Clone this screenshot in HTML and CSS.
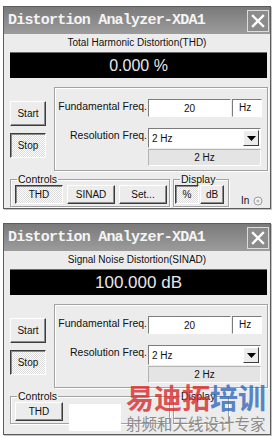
FILE: index.html
```html
<!DOCTYPE html>
<html lang="en">
<head>
    <meta charset="UTF-8">
    <meta name="viewport" content="width=device-width, initial-scale=1.0">
    <title>Distortion Analyzer-XDA1</title>
    <link rel="stylesheet" href="styles.css">
</head>
<body>
    <div class="window">
        <div class="titlebar">
            <span class="title">Distortion Analyzer-XDA1</span>
            <span class="close">
                <svg width="14" height="14" viewBox="0 0 14 14"><path d="M2 2 L12 12 M12 2 L2 12" stroke="#fff" stroke-width="2.4" stroke-linecap="square"/></svg>
            </span>
        </div>
        <div class="caption">Total Harmonic Distortion(THD)</div>
        <div class="display">0.000 %</div>

        <div class="main">
            <div class="run-buttons">
                <span class="btn">Start</span>
                <span class="btn pressed">Stop</span>
            </div>
            <div class="freq-box">
                <div class="row">
                    <span class="label">Fundamental Freq.</span>
                    <span class="field">20</span>
                    <span class="unit">Hz</span>
                </div>
                <div class="row row-select">
                    <span class="label">Resolution Freq.</span>
                    <span class="select">2 Hz<span class="arrow"><svg width="9" height="5" viewBox="0 0 9 5"><path d="M0 0 H9 L4.5 5 Z" fill="#000"/></svg></span></span>
                </div>
                <div class="readout">2 Hz</div>
            </div>
        </div>

        <div class="bottom">
            <fieldset class="group controls">
                <legend>Controls</legend>
                <div class="group-buttons">
                    <span class="btn pressed">THD</span>
                    <span class="btn">SINAD</span>
                    <span class="btn">Set...</span>
                </div>
            </fieldset>
            <fieldset class="group display-group">
                <legend>Display</legend>
                <div class="group-buttons">
                    <span class="btn pressed small">%</span>
                    <span class="btn small">dB</span>
                </div>
            </fieldset>
            <span class="in">In
                <svg width="10" height="10" viewBox="0 0 10 10"><circle cx="5" cy="5" r="4" fill="#f4f4f4" stroke="#9a9a9a"/><circle cx="5" cy="5" r="1.6" fill="#bbb"/></svg>
            </span>
        </div>
    </div>

    <div class="window tall">
        <div class="titlebar">
            <span class="title">Distortion Analyzer-XDA1</span>
            <span class="close">
                <svg width="14" height="14" viewBox="0 0 14 14"><path d="M2 2 L12 12 M12 2 L2 12" stroke="#fff" stroke-width="2.4" stroke-linecap="square"/></svg>
            </span>
        </div>
        <div class="caption">Signal Noise Distortion(SINAD)</div>
        <div class="display big">100.000 dB</div>

        <div class="main">
            <div class="run-buttons">
                <span class="btn">Start</span>
                <span class="btn pressed">Stop</span>
            </div>
            <div class="freq-box">
                <div class="row">
                    <span class="label">Fundamental Freq.</span>
                    <span class="field">20</span>
                    <span class="unit">Hz</span>
                </div>
                <div class="row row-select">
                    <span class="label">Resolution Freq.</span>
                    <span class="select">2 Hz<span class="arrow"><svg width="9" height="5" viewBox="0 0 9 5"><path d="M0 0 H9 L4.5 5 Z" fill="#000"/></svg></span></span>
                </div>
                <div class="readout">2 Hz</div>
            </div>
        </div>

        <!-- the rest of this row is hidden under the watermark in the shot -->
        <div class="bottom">
            <fieldset class="group controls">
                <legend>Controls</legend>
                <div class="group-buttons">
                    <span class="btn">THD</span>
                    <span class="btn covered">SINAD</span>
                    <span class="btn covered">Set...</span>
                </div>
            </fieldset>
            <fieldset class="group display-group">
                <legend>Display</legend>
                <div class="group-buttons">
                    <span class="btn small covered">%</span>
                    <span class="btn small covered">dB</span>
                </div>
            </fieldset>
        </div>
    </div>

    <div class="blank"></div>
    <div class="watermark">
        <div class="wm-big"><span class="wm-red">易迪拓</span><span class="wm-blue">培训</span></div>
        <div class="wm-small">射频和天线设计专家</div>
    </div>
</body>
</html>
```

FILE: styles.css
```css
body {
    margin: 0;
    padding: 6px 0 0 3px;
    height: 436px;
    box-sizing: border-box;
    overflow: hidden;
    position: relative;
    background: #fff;
    font-family: "Liberation Sans", Arial, sans-serif;
    font-size: 10px;
    color: #111;
}

.window {
    width: 268px;
    box-sizing: border-box;
    border: 1px solid #5c5c5c;
    background: #ececec;
    padding-bottom: 1px;
    box-shadow: 1px 1px 0 #c4c4c4;
}

.window + .window {
    margin-top: 14px;
}

.window.tall {
    padding-bottom: 10px;
}

.titlebar {
    height: 27px;
    display: flex;
    align-items: center;
    justify-content: space-between;
    padding: 0 1px 0 4px;
    background: linear-gradient(#7a7a7a, #9c9c9c);
}

.title {
    font-family: "Liberation Mono", monospace;
    font-weight: bold;
    font-size: 15px;
    letter-spacing: -0.8px;
    color: #f4f4f4;
}

.close {
    width: 20px;
    height: 20px;
    border: 1px solid #dcdcdc;
    background: #8c8c8c;
    display: flex;
    align-items: center;
    justify-content: center;
}

.caption {
    height: 18px;
    line-height: 18px;
    text-align: center;
}

.display {
    margin: 0 3px 0 6px;
    height: 26px;
    line-height: 26px;
    background: #000;
    border-top: 1px solid #6a6a6a;
    box-sizing: border-box;
    color: #e8e8e8;
    font-size: 16px;
    text-align: center;
}

.display.big {
    font-size: 17px;
}

.main {
    display: flex;
    align-items: flex-start;
    gap: 8px;
    margin-top: 9px;
    padding-left: 6px;
}

.run-buttons {
    display: flex;
    flex-direction: column;
    gap: 7px;
    margin-top: 14px;
    width: 36px;
}

.btn {
    height: 25px;
    box-sizing: border-box;
    display: flex;
    align-items: center;
    justify-content: center;
    background: #ececec;
    border: 1px solid;
    border-color: #fff #3c3c3c #3c3c3c #fff;
    box-shadow: inset -1px -1px 0 #8c8c8c;
}

.btn.pressed {
    border-color: #3c3c3c #fff #fff #3c3c3c;
    box-shadow: inset 1px 1px 0 #8c8c8c;
    background-color: #f6f6f6;
    background-image: conic-gradient(#fff 25%, #dadada 0 50%, #fff 0 75%, #dadada 0);
    background-size: 2px 2px;
}

.btn.covered {
    visibility: hidden;
}

.freq-box {
    flex: 1;
    margin-right: 2px;
    height: 84px;
    box-sizing: border-box;
    border: 1px solid #a2a2a2;
    box-shadow: inset 1px 1px 0 #fff, 1px 1px 0 #fff;
    padding-top: 11px;
}

.row {
    display: flex;
    align-items: flex-start;
    gap: 1px;
}

.row-select {
    margin-top: 11px;
}

.label {
    width: 92px;
    text-align: right;
    font-size: 10.5px;
    line-height: 12px;
    padding-top: 1px;
}

.field,
.unit {
    height: 18px;
    box-sizing: border-box;
    background: #fff;
    border: 1px solid;
    border-color: #7c7c7c #fff #fff #7c7c7c;
    line-height: 16px;
}

.field {
    width: 83px;
    text-align: center;
    padding-top: 1px;
}

.unit {
    width: 30px;
    padding-left: 6px;
}

.select {
    width: 113px;
    height: 20px;
    box-sizing: border-box;
    background: #fff;
    border: 1px solid;
    border-color: #7c7c7c #fff #fff #7c7c7c;
    display: flex;
    align-items: center;
    justify-content: space-between;
    padding-left: 3px;
}

.arrow {
    width: 16px;
    height: 16px;
    box-sizing: border-box;
    margin-right: 1px;
    background: #ececec;
    border: 1px solid;
    border-color: #fff #3c3c3c #3c3c3c #fff;
    display: flex;
    align-items: center;
    justify-content: center;
}

.readout {
    margin: 1px 0 0 93px;
    width: 113px;
    height: 17px;
    box-sizing: border-box;
    line-height: 15px;
    text-align: center;
    background: #e4e4e4;
    border: 1px solid;
    border-color: #b4b4b4 #fff #fff #b4b4b4;
}

.bottom {
    display: flex;
    align-items: flex-end;
    gap: 3px;
    margin-top: 2px;
    padding-left: 6px;
}

.group {
    margin: 0;
    padding: 0 2px 2px 4px;
    border: 1px solid #a2a2a2;
    box-shadow: inset 1px 1px 0 #fff, 1px 1px 0 #fff;
}

.group legend {
    padding: 0 1px;
    margin-left: 2px;
    line-height: 13px;
    font-size: 10.5px;
}

.group-buttons {
    display: flex;
    gap: 4px;
    margin-top: -1px;
}

.controls {
    width: 160px;
    box-sizing: border-box;
}

.controls .btn {
    width: 48px;
    height: 19px;
}

.display-group {
    width: 56px;
    box-sizing: border-box;
    padding-left: 1px;
}

.display-group legend {
    margin-left: 5px;
}

.display-group .group-buttons {
    gap: 1px;
}

.btn.small {
    width: 24px;
    height: 19px;
}

.in {
    display: flex;
    align-items: center;
    gap: 4px;
    margin-left: 9px;
    margin-bottom: 1px;
}

.blank {
    position: absolute;
    left: 69px;
    top: 404px;
    width: 52px;
    height: 27px;
    background: #fff;
}

.watermark {
    position: absolute;
    left: 126px;
    top: 382px;
    font-family: "Noto Sans CJK SC", sans-serif;
}

.wm-big {
    font-size: 28px;
    font-weight: bold;
    line-height: 31px;
}

.wm-red {
    color: rgba(214, 40, 40, 0.8);
}

.wm-blue {
    color: rgba(46, 104, 186, 0.8);
}

.wm-small {
    font-size: 15.5px;
    line-height: 20px;
    color: #8c8c8c;
}
```
